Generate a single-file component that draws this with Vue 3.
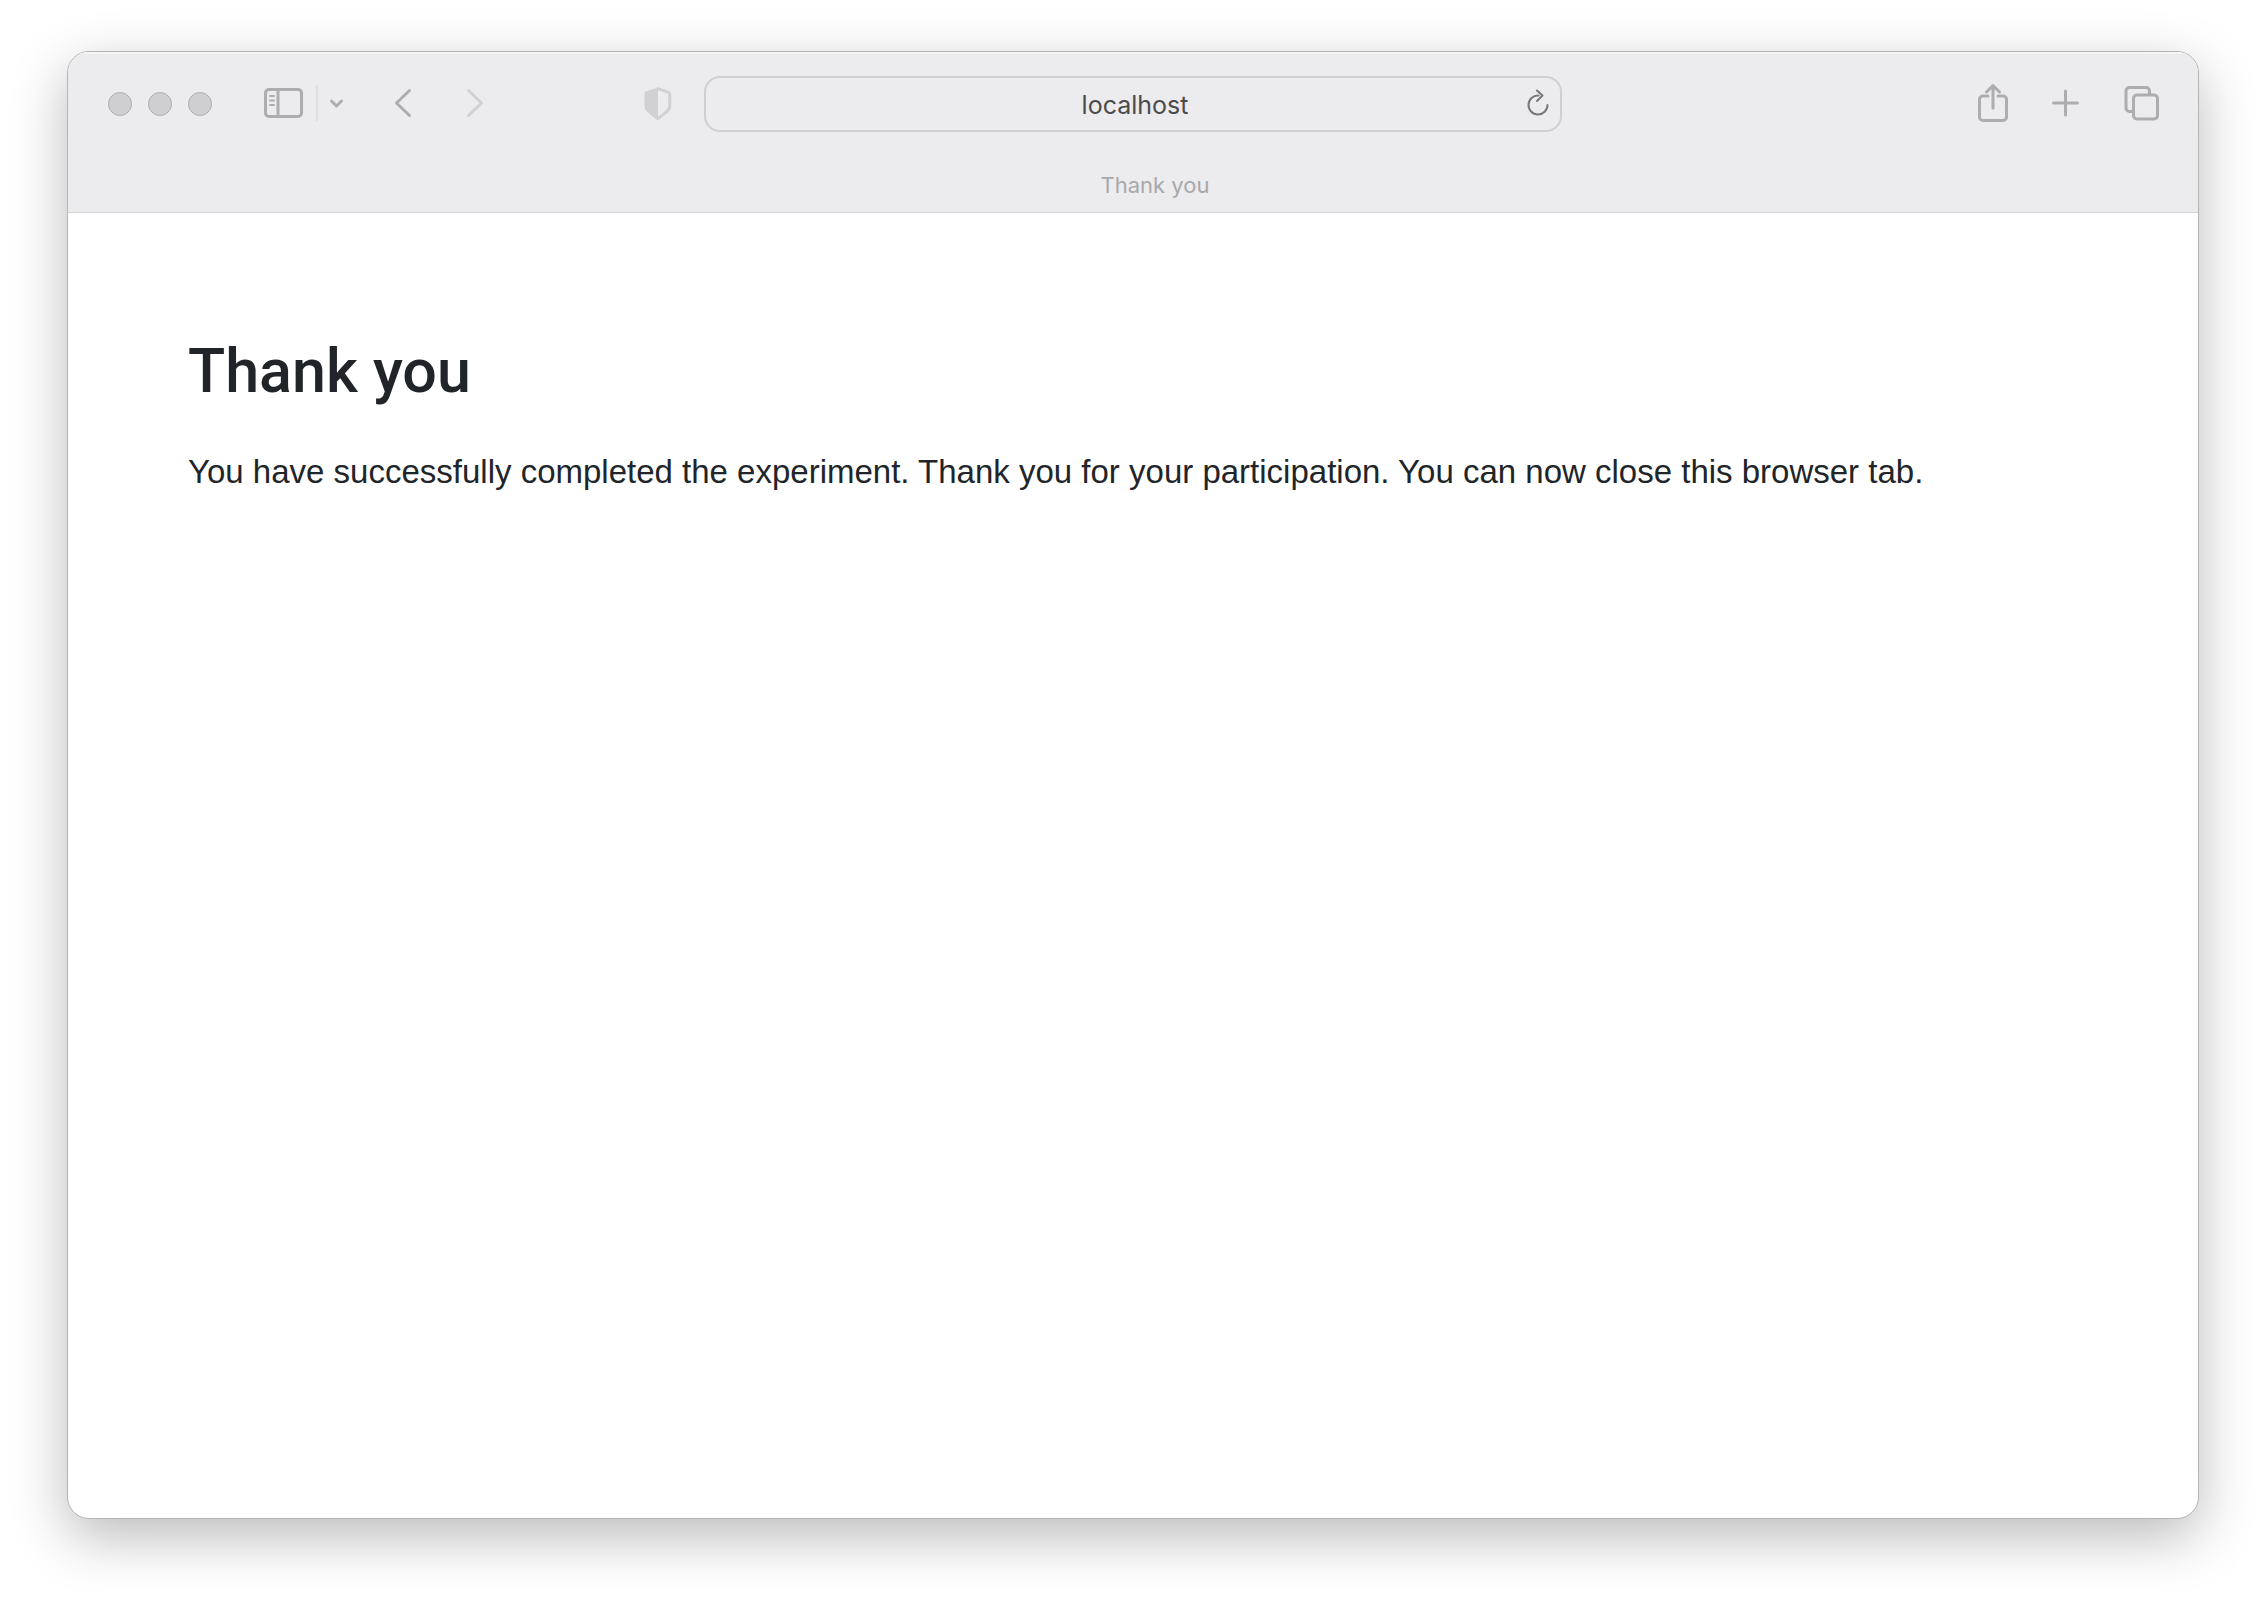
<script setup>
import { ref } from 'vue'

const address = ref('localhost')
const title = 'Thank you'
const message =
  'You have successfully completed the experiment. Thank you for your participation. You can now close this browser tab.'
</script>

<template>
  <div class="desktop">
    <div class="window">
      <header class="chrome">
        <div class="toolbar">
          <div class="tools left">
            <div class="lights">
              <button class="light" type="button" aria-label="Close"></button>
              <button class="light" type="button" aria-label="Minimise"></button>
              <button class="light" type="button" aria-label="Zoom"></button>
            </div>
            <div class="sidebar-group">
              <button class="tool" type="button" aria-label="Show sidebar">
                <svg width="40" height="32" viewBox="0 0 40 32">
                  <rect x="1.5" y="2.5" width="36" height="27" rx="3.5" />
                  <path d="M14 3v26" />
                  <path class="thin" d="M6 9h4M6 13.5h4M6 18h4" />
                </svg>
              </button>
              <span class="divider"></span>
              <button class="tool" type="button" aria-label="Sidebar options">
                <svg width="14" height="12" viewBox="0 0 14 12">
                  <path d="M1.500 4 6.500 9l5-5" />
                </svg>
              </button>
            </div>
            <div class="history">
              <button class="tool" type="button" aria-label="Back">
                <svg width="20" height="32" viewBox="0 0 20 32">
                  <path d="M17.500 3.500 4.500 16l13 12.500" />
                </svg>
              </button>
              <button class="tool faint" type="button" aria-label="Forward" disabled>
                <svg width="20" height="32" viewBox="0 0 20 32">
                  <path d="M4.500 3.500 17.500 16l-13 12.500" />
                </svg>
              </button>
            </div>
            <button class="tool faint shield" type="button" aria-label="Privacy report">
              <svg width="28" height="34" viewBox="0 0 28 34">
                <path class="fill" d="M14 .5c-.5 0-1 .2-1.500.4L2.500 4.300C1.200 4.800.5 5.500.5 7v12c0 3 1.500 5 4 7l7.500 6c.8.6 1.400 1 2 1z" />
                <path d="M14 1.700 24 5.200c1.200.4 1.800 1 1.800 2.300V19c0 2.500-1 4-3.500 6L14 31.700" />
              </svg>
            </button>
          </div>

          <form class="address" @submit.prevent>
            <input v-model="address" type="text" aria-label="Address" />
            <button class="tool reload" type="button" aria-label="Reload">
              <svg width="24" height="28" viewBox="0 0 24 28">
                <path d="M12.500 6.500A9.500 9.500 0 1 0 21.500 16" />
                <path d="m11 1.500 5.500 5-5.500 5.500" />
              </svg>
            </button>
          </form>

          <div class="tools right">
            <button class="tool" type="button" aria-label="Share">
              <svg width="30" height="40" viewBox="1 0 30 40">
                <path d="M11 13H6a3.500 3.500 0 0 0-3.500 3.500v17.500A3.500 3.500 0 0 0 6 37.500h20a3.500 3.500 0 0 0 3.500-3.500V16.500A3.500 3.500 0 0 0 26 13h-5" />
                <path d="M16 25V3M9.500 9 16 2.500 22.500 9" />
              </svg>
            </button>
            <button class="tool" type="button" aria-label="New tab">
              <svg width="28" height="28" viewBox="0 0 28 28">
                <path d="M13.500 2v24M1.500 14h24" />
              </svg>
            </button>
            <button class="tool" type="button" aria-label="Tab overview">
              <svg width="36" height="36" viewBox="0 0 36 36">
                <rect x="9.500" y="10" width="24" height="24" rx="3.500" />
                <path d="M9 26.500H5.500A3.500 3.500 0 0 1 2 23V6A3.500 3.500 0 0 1 5.500 2.500H22a3.500 3.500 0 0 1 3.500 3.500V9.500" />
              </svg>
            </button>
          </div>
        </div>

        <div class="tabs">
          <button class="tab" type="button">{{ title }}</button>
        </div>
      </header>

      <main class="page">
        <h1>{{ title }}</h1>
        <p>{{ message }}</p>
      </main>
    </div>
  </div>
</template>

<style>
body {
  margin: 0;
  background: #fff;
}
</style>

<style scoped>
.desktop {
  box-sizing: border-box;
  display: flex;
  min-height: 100vh;
  padding: 51px 67px 83px;
  font-family: Inter, "Liberation Sans", sans-serif;
}

.window {
  flex: 1;
  min-width: 0;
  display: flex;
  flex-direction: column;
  border: 1px solid #b4b4b4;
  border-radius: 22px;
  background: #fff;
  box-shadow: 0 18px 56px rgba(0, 0, 0, 0.27);
  overflow: hidden;
}

.chrome {
  background: #ececee;
  border-bottom: 1px solid #d4d4d5;
  box-shadow: inset 0 2px 0 #f5f5f6;
}

.toolbar {
  display: grid;
  grid-template-columns: 1fr minmax(0, 858px) 1fr;
  align-items: center;
  height: 104px;
}

button {
  margin: 0;
  padding: 0;
  border: 0;
  background: none;
  font: inherit;
}

.tools,
.lights,
.sidebar-group,
.history {
  display: flex;
  align-items: center;
}

.left {
  padding: 0 32px 0 40px;
}

.right {
  justify-content: flex-end;
  gap: 44px;
  padding: 0 38px 2px 0;
}

.lights {
  gap: 16px;
}

.light {
  box-sizing: border-box;
  width: 24px;
  height: 24px;
  border: 1px solid #adadae;
  border-radius: 50%;
  background: #cfcfd1;
}

.sidebar-group {
  gap: 12px;
  margin-left: 52px;
  padding-bottom: 2px;
}

.divider {
  width: 2px;
  height: 36px;
  background: #dedee0;
}

.history {
  gap: 52px;
  margin-left: 48px;
  padding-bottom: 2px;
}

.shield {
  margin-left: auto;
}

.tool {
  display: flex;
  color: #adadaf;
}

.faint {
  color: #d1d1d3;
}

svg {
  display: block;
  overflow: visible;
  fill: none;
  stroke: currentColor;
  stroke-width: 3;
  stroke-linecap: round;
  stroke-linejoin: round;
}

svg .thin {
  stroke-width: 2;
}

svg .fill {
  fill: currentColor;
  stroke: none;
}

.address {
  display: grid;
  align-items: center;
}

.address > * {
  grid-area: 1 / 1;
}

.address input {
  box-sizing: border-box;
  width: 100%;
  height: 56px;
  padding: 2px 40px 0 44px;
  border: 2px solid #cfcfd1;
  border-radius: 16px;
  outline: none;
  background: transparent;
  color: #4b4b4c;
  font: 400 25px/32px Inter, "Liberation Sans", sans-serif;
  text-align: center;
}

.reload {
  justify-self: end;
  margin-right: 12px;
  padding-bottom: 2px;
  color: #78787a;
}

.reload svg {
  stroke-width: 2;
}

.tabs {
  display: flex;
  box-sizing: border-box;
  height: 56px;
  padding: 2px 0 0 44px;
}

.tab {
  flex: 1;
  color: #a8a8aa;
  font-size: 22px;
  line-height: 28px;
}

.page {
  padding: 120px;
  color: #212529;
}

h1 {
  margin: 0 0 40px;
  font-family: Roboto, "Liberation Sans", sans-serif;
  font-size: 61px;
  font-weight: 500;
  line-height: 76px;
}

p {
  margin: 0;
  font-family: "Liberation Sans", sans-serif;
  font-size: 33px;
  line-height: 46px;
}
</style>
